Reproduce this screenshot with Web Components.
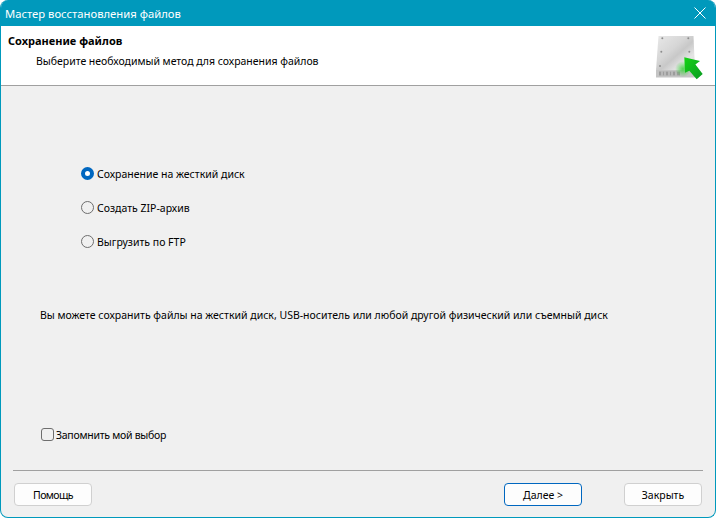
<!DOCTYPE html>
<html lang="ru">
<head>
<meta charset="utf-8">
<title>Мастер восстановления файлов</title>
<style>
  html, body { margin: 0; height: 100%; background: #fff; }
  body { font-family: "Noto Sans", "Open Sans", sans-serif; font-size: 10.5px; color: #000; }
</style>
</head>
<body>
<wizard-window caption="Мастер восстановления файлов">
  <wizard-header slot="header" heading="Сохранение файлов" sub="Выберите необходимый метод для сохранения файлов"></wizard-header>
  <div slot="options" style="display:flex;flex-direction:column;gap:17px">
    <wizard-choice kind="radio" checked>Сохранение на жесткий диск</wizard-choice>
    <wizard-choice kind="radio">Создать ZIP-архив</wizard-choice>
    <wizard-choice kind="radio">Выгрузить по FTP</wizard-choice>
  </div>
  <span slot="note">Вы можете сохранить файлы на жесткий диск, USB-носитель или любой другой физический или съемный диск</span>
  <wizard-choice slot="remember" kind="check" style="letter-spacing:-.27px">Запомнить мой выбор</wizard-choice>
  <wizard-button slot="left" style="letter-spacing:-.6px">Помощь</wizard-button>
  <wizard-button slot="right" primary style="margin-right:42px">Далее &gt;</wizard-button>
  <wizard-button slot="right">Закрыть</wizard-button>
</wizard-window>

<script>
class WizardWindow extends HTMLElement {
  constructor() {
    super();
    this.attachShadow({ mode: 'open' });
  }

  connectedCallback() {
    const caption = this.getAttribute('caption') || '';
    this.shadowRoot.innerHTML = `
      <style>
        :host {
          display: flex;
          flex-direction: column;
          box-sizing: border-box;
          width: 716px;
          height: 518px;
          background: #f0f0f0;
          border: 1px solid #0099bc;
          border-top: none;
          border-radius: 8px;
          overflow: hidden;
        }
        .title {
          display: flex;
          align-items: center;
          justify-content: space-between;
          height: 26px;
          padding: 0 9px 0 4px;
          background: #0099bc;
          color: #fff;
          font-size: 11.25px;
          flex: none;
        }
        .close { width: 12px; height: 12px; display: block; }
        .body {
          flex: 1;
          display: flex;
          flex-direction: column;
          padding: 0 12px;
        }
        .options { padding: 79px 0 0 68px; }
        .note { padding: 57px 0 0 27px; line-height: 16px; }
        .remember { margin-top: auto; padding: 0 0 0 28px; }
        .sep {
          height: 1px;
          background: #a0a0a0;
          margin-top: 27px;
        }
        .foot {
          display: flex;
          justify-content: space-between;
          padding: 12px 1px 11px 1px;
        }
        .foot div { display: flex; }
      </style>
      <div class="title">
        <span>${caption}</span>
        <svg class="close" viewBox="0 0 12 12"><path d="M.5.5l11 11M11.5.5l-11 11" stroke="#fff" stroke-width="1" fill="none"/></svg>
      </div>
      <slot name="header"></slot>
      <div class="body">
        <div class="options"><slot name="options"></slot></div>
        <div class="note"><slot name="note"></slot></div>
        <div class="remember"><slot name="remember"></slot></div>
        <div class="sep"></div>
        <div class="foot">
          <div><slot name="left"></slot></div>
          <div><slot name="right"></slot></div>
        </div>
      </div>
    `;
  }
}

class WizardHeader extends HTMLElement {
  constructor() {
    super();
    this.attachShadow({ mode: 'open' });
  }

  connectedCallback() {
    this.shadowRoot.innerHTML = `
      <style>
        :host {
          display: flex;
          justify-content: space-between;
          box-sizing: border-box;
          height: 60px;
          background: #fff;
          border-bottom: 1px solid #a0a0a0;
          flex: none;
          padding: 0 11px 0 7px;
        }
        h1 { margin: 0; padding-top: 7px; font-size: 11px; line-height: 16px; font-weight: 700; }
        p { margin: 0; padding: 4px 0 0 28px; line-height: 16px; letter-spacing: -.02px; }
        svg { display: block; margin-top: 8px; }
      </style>
      <div>
        <h1>${this.getAttribute('heading')}</h1>
        <p>${this.getAttribute('sub')}</p>
      </div>
      <svg width="50" height="48" viewBox="0 0 50 48">
        <defs>
          <linearGradient id="disk" x1="0" y1="0" x2="1" y2="1">
            <stop offset="0" stop-color="#e8e8e8"/>
            <stop offset=".4" stop-color="#d6d6d6"/>
            <stop offset=".55" stop-color="#c8c8c8"/>
            <stop offset=".75" stop-color="#e4e4e4"/>
            <stop offset="1" stop-color="#dadada"/>
          </linearGradient>
          <linearGradient id="arrow" x1="0" y1="0" x2="1" y2="1">
            <stop offset="0" stop-color="#16d416"/>
            <stop offset="1" stop-color="#0a9a22"/>
          </linearGradient>
          <radialGradient id="glow">
            <stop offset="0" stop-color="#3bd43b" stop-opacity=".85"/>
            <stop offset="1" stop-color="#3bd43b" stop-opacity="0"/>
          </radialGradient>
          <filter id="soft"><feGaussianBlur stdDeviation=".35"/></filter>
        </defs>
        <g filter="url(#soft)">
          <path d="M4.5 2h35l1.5 34H2z" fill="url(#disk)"/>
          <path d="M2 36h39v7.5H2z" fill="#c4c4c4"/>
          <path d="M5 37.5h21v4H5z" fill="#9c9c9c"/>
          <path d="M8 37.5v4M11 37.5v4M15 37.5v4M18 37.5v4M22 37.5v4" stroke="#d4d4d4" stroke-width="1"/>
          <g fill="#8c8c8c">
            <circle cx="8.3" cy="4.3" r="1"/><circle cx="34.3" cy="4.3" r="1"/>
            <circle cx="7.3" cy="17.7" r="1"/><circle cx="35.3" cy="17.7" r="1"/>
            <circle cx="6" cy="32" r="1"/>
          </g>
        </g>
        <ellipse cx="29" cy="35" rx="8" ry="8" fill="url(#glow)"/>
        <path d="M30.3 23.3L46 27l-4.6 3.4L48.7 40l-6 5.3-7.4-8.6-4.3 2z" fill="url(#arrow)"/>
      </svg>
    `;
  }
}

class WizardChoice extends HTMLElement {
  constructor() {
    super();
    this.attachShadow({ mode: 'open' });
  }

  connectedCallback() {
    const radio = this.getAttribute('kind') === 'radio';
    const checked = this.hasAttribute('checked');
    this.shadowRoot.innerHTML = `
      <style>
        :host { display: flex; align-items: center; height: 17px; line-height: 16px; }
        .mark {
          box-sizing: border-box;
          width: 13px;
          height: 13px;
          margin-right: ${radio ? '3px' : '2px'};
          border: 1px solid #6e6e6e;
          border-radius: ${radio ? '50%' : '3px'};
          background: #f0f0f0;
          flex: none;
        }
        .mark.on { border: 4px solid #0067c0; background: #fff; }
      </style>
      <span class="mark ${checked ? 'on' : ''}"></span>
      <span><slot></slot></span>
    `;
  }
}

class WizardButton extends HTMLElement {
  constructor() {
    super();
    this.attachShadow({ mode: 'open' });
  }

  connectedCallback() {
    const primary = this.hasAttribute('primary');
    this.shadowRoot.innerHTML = `
      <style>
        :host {
          display: flex;
          align-items: center;
          justify-content: center;
          box-sizing: border-box;
          width: 78px;
          height: 23px;
          background: #fdfdfd;
          border: 1px solid ${primary ? '#0067c0' : '#d0d0d0'};
          border-radius: 4px;
        }
      </style>
      <slot></slot>
    `;
  }
}

customElements.define('wizard-window', WizardWindow);
customElements.define('wizard-header', WizardHeader);
customElements.define('wizard-choice', WizardChoice);
customElements.define('wizard-button', WizardButton);
</script>
</body>
</html>
